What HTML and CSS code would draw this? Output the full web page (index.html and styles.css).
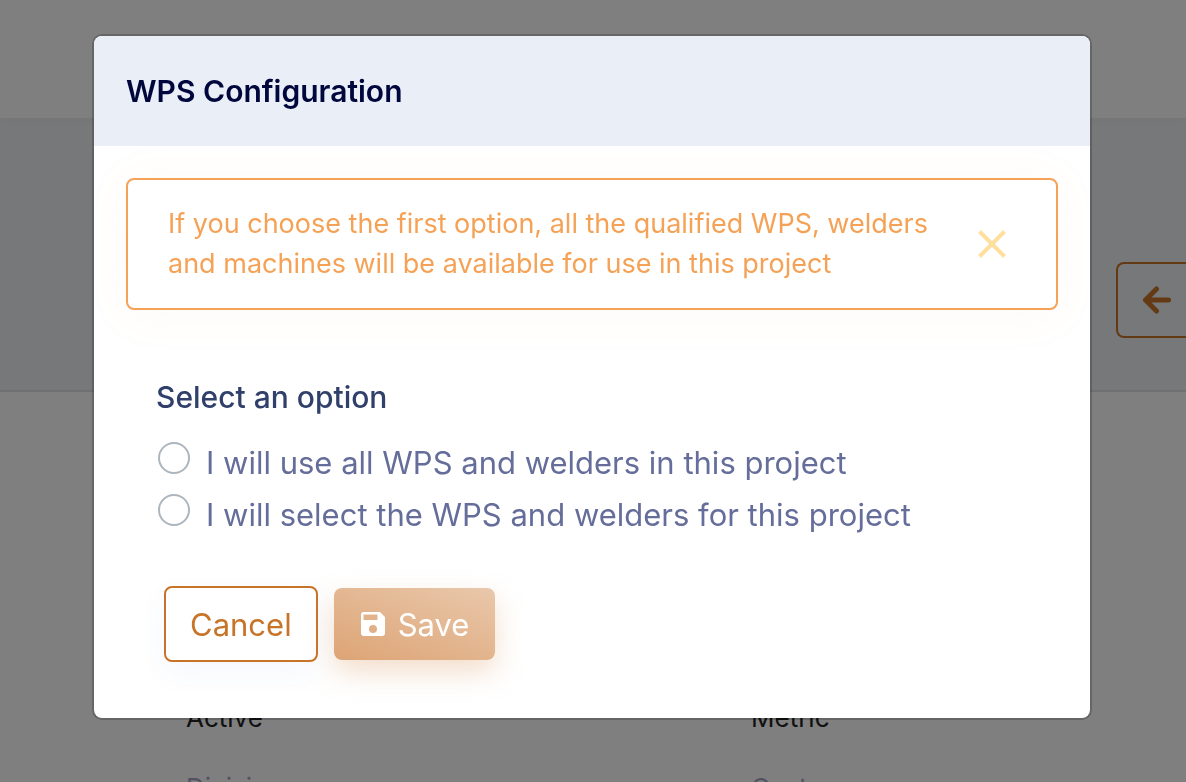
FILE: index.html
```
<!DOCTYPE html>
<html lang="en">
<head>
    <meta charset="UTF-8">
    <meta name="viewport" content="width=device-width, initial-scale=1.0">
    <title>WPS Configuration</title>
    <link rel="stylesheet" href="styles.css">
</head>
<body>
    <header class="topbar"></header>

    <div class="banner">
        <button type="button" class="back-btn" aria-label="Back">
            <svg width="30" height="30" viewBox="0 0 30 30" fill="none" stroke="currentColor" stroke-width="5" stroke-linecap="round" stroke-linejoin="round">
                <path d="M14.5 4 L3.5 15 L14.5 26 M3.5 15 H26.5"/>
            </svg>
        </button>
    </div>

    <main class="details">
        <dl class="details-column">
            <dd class="details-value">Active</dd>
            <dt class="details-label">Division</dt>
        </dl>
        <dl class="details-column">
            <dd class="details-value">Metric</dd>
            <dt class="details-label">Customer</dt>
        </dl>
    </main>

    <div class="overlay">
        <div class="modal" role="dialog" aria-modal="true" aria-labelledby="modalTitle">
            <div class="modal-header">
                <h1 class="modal-title" id="modalTitle">WPS Configuration</h1>
            </div>
            <div class="modal-body">
                <div class="alert" role="alert">
                    <p class="alert-text">If you choose the first option, all the qualified WPS, welders and machines will be available for use in this project</p>
                    <button type="button" class="alert-close" aria-label="Close">
                        <svg width="28" height="28" viewBox="0 0 28 28" fill="none" stroke="currentColor" stroke-width="4">
                            <path d="M1.5 1.5 L26.5 26.5 M26.5 1.5 L1.5 26.5"/>
                        </svg>
                    </button>
                </div>

                <form class="wps-form">
                    <fieldset class="options">
                        <legend class="options-title">Select an option</legend>
                        <div class="option">
                            <input type="radio" class="option-radio" name="wps" id="useAll" value="all">
                            <label class="option-label" for="useAll">I will use all WPS and welders in this project</label>
                        </div>
                        <div class="option">
                            <input type="radio" class="option-radio" name="wps" id="useSelected" value="selected">
                            <label class="option-label" for="useSelected">I will select the WPS and welders for this project</label>
                        </div>
                    </fieldset>
                    <div class="actions">
                        <button type="button" class="btn btn-cancel">Cancel</button>
                        <button type="submit" class="btn btn-save" disabled>
                            <svg width="26" height="26" viewBox="0 0 26 26" fill="currentColor">
                                <path fill-rule="evenodd" d="M4 1 H20 L25 6 V22 A3 3 0 0 1 22 25 H4 A3 3 0 0 1 1 22 V4 A3 3 0 0 1 4 1 Z M3.5 3.5 V9 H17.5 V3.5 Z M13 14 A4 4 0 1 0 13 22 A4 4 0 1 0 13 14 Z"/>
                            </svg>
                            Save
                        </button>
                    </div>
                </form>
            </div>
        </div>
    </div>
</body>
</html>
```
FILE: styles.css
```
* {
    box-sizing: border-box;
}

body {
    margin: 0;
    height: 100vh;
    overflow: hidden;
    background-color: #fff;
    font-family: Inter, 'Liberation Sans', sans-serif;
}

button,
input {
    font-family: inherit;
}

/* page behind the dialog */
.topbar {
    height: 118px;
    background-color: #fff;
    box-shadow: 0 2px 12px rgba(0, 0, 0, 0.04);
    position: relative;
}

.banner {
    display: flex;
    justify-content: flex-end;
    align-items: center;
    height: 274px;
    padding-top: 92px;
    background-color: #eff1f5;
    border-bottom: 2px solid #e0e0e2;
    overflow: hidden;
}

.back-btn {
    flex: none;
    display: flex;
    align-items: center;
    height: 76px;
    padding: 0 14px 0 24px;
    background: none;
    border: 2px solid #c87428;
    border-right: none;
    border-radius: 8px 0 0 8px;
    color: #c87428;
}

.details {
    display: grid;
    grid-template-columns: 1fr 1fr;
    padding: 310px 0 0 186px;
    column-gap: 130px;
}

.details-column {
    margin: 0;
}

.details-value,
.details-label {
    margin: 0;
    font-size: 26px;
    line-height: 32px;
}

.details-value {
    margin-bottom: 38px;
    color: #222;
}

.details-label {
    color: #a3a4c4;
}

.overlay {
    position: fixed;
    inset: 0;
    padding: 34px 94px 0 92px;
    background-color: rgba(0, 0, 0, 0.5);
}

/* dialog */
.modal {
    background-color: #fff;
    background-clip: padding-box;
    border: 2px solid rgba(0, 0, 0, 0.2);
    border-radius: 10px;
    overflow: hidden;
}

.modal-header {
    padding: 32px;
    background-color: #eaeef7;
}

.modal-title {
    margin: 0;
    color: #00073d;
    font-size: 30px;
    line-height: 46px;
    font-weight: 600;
}

.modal-body {
    padding: 32px 32px 56px;
}

.alert {
    display: flex;
    align-items: center;
    justify-content: space-between;
    padding: 24px 50px 24px 40px;
    border: 2px solid #f5a256;
    border-radius: 8px;
    background-color: #fff;
    box-shadow: 0 4px 50px rgba(245, 162, 86, 0.06);
}

.alert-text {
    margin: 0;
    max-width: 780px;
    color: #f5a256;
    font-size: 27px;
    line-height: 40px;
}

.alert-close {
    display: flex;
    padding: 0;
    background: none;
    border: none;
    color: #ffdf9e;
}

.wps-form {
    padding: 64px 30px 0;
}

.options {
    margin: 0;
    padding: 0;
    border: none;
}

.options-title {
    padding: 0;
    margin-bottom: 16px;
    color: #31406b;
    font-size: 30px;
    line-height: 46px;
    font-weight: 500;
}

.option {
    display: flex;
    align-items: flex-start;
    gap: 16px;
    padding: 2px;
}

.option-radio {
    appearance: none;
    flex: none;
    width: 32px;
    height: 32px;
    margin: 4px 0 0;
    background-color: #fff;
    border: 2px solid #adb5bd;
    border-radius: 50%;
}

.option-radio:checked {
    border: 10px solid #c87428;
}

.option-label {
    padding-top: 2px;
    color: #656d9a;
    font-size: 31px;
    line-height: 46px;
}

.actions {
    display: flex;
    align-items: center;
    gap: 16px;
    padding: 46px 8px 0;
}

.btn {
    display: flex;
    align-items: center;
    gap: 12px;
    height: 76px;
    padding: 0 24px;
    border-radius: 8px;
    font-size: 31px;
}

.btn-cancel {
    background-color: #fff;
    border: 2px solid #c87428;
    color: #c87428;
    box-shadow: 0 10px 30px rgba(60, 90, 200, 0.05);
}

.btn-save {
    height: 72px;
    padding: 0 26px;
    border: none;
    background-image: linear-gradient(20deg, #dda475, #e9c8ab);
    color: #fff;
    box-shadow: 0 12px 28px rgba(221, 160, 110, 0.35);
}
```
